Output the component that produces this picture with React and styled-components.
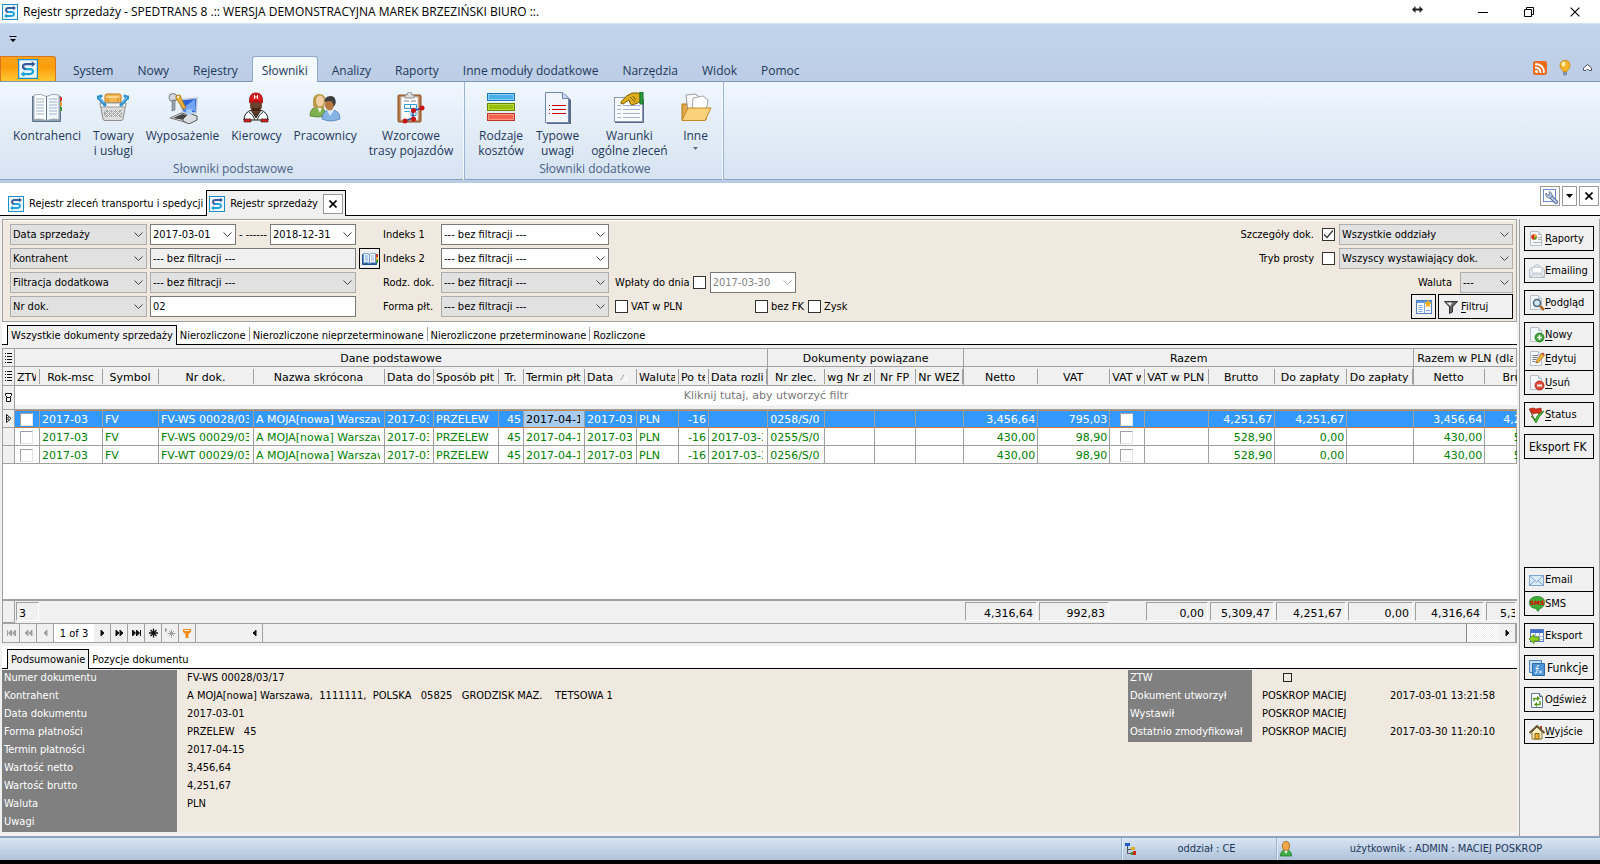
import React from "react";
import styled, { createGlobalStyle, css } from "styled-components";

const GlobalStyle = createGlobalStyle`
  *, *::before, *::after { box-sizing: border-box; }
  body {
    margin: 0;
    background: #f0f0f0;
    color: #000;
    font: 11px/14px "DejaVu Sans Condensed", "DejaVu Sans", sans-serif;
  }
  button, input, select {
    font: inherit;
    color: inherit;
    border-radius: 0;
    margin: 0;
  }
  button { padding: 0; }
  svg { display: block; flex: none; }
  a { color: inherit; text-decoration: none; }
`;

const uiFont = css`
  font-family: "Open Sans", "Noto Sans", sans-serif;
  font-size: 12px;
  line-height: 15px;
`;

/* ---------- icons ---------- */

const Logo = ({ size = 16 }) => (
  <svg width={size} height={size} viewBox="0 0 16 16">
    <rect x=".5" y=".5" width="15" height="15" fill="#eef7fc" stroke="#1b8ecb" />
    <path d="M12 4H6.500Q4 4 4 6t2.500 2" fill="none" stroke="#3b5a9a" strokeWidth="1.800" />
    <path d="M6 8h3.500Q12 8.200 12 10t-2.500 2H4" fill="none" stroke="#1da3d8" strokeWidth="1.800" />
    <path d="M11 1.700 14 4l-3 2.300z" fill="#3b5a9a" />
    <path d="M5 9.700 2 12l3 2.300z" fill="#1da3d8" />
  </svg>
);

const BookIcon = () => (
  <svg width="32" height="32" viewBox="0 0 32 32">
    <path d="M1.500 4.500h28v25h-28z" fill="#8fa3b5" stroke="#5c7288" />
    <path d="M3 3q7-2 12.500 1.500v24Q9 26 3 27.500z" fill="#fff" stroke="#9aa8b5" />
    <path d="M28 3q-7-2-12.500 1.500v24Q22 26 28 27.500z" fill="#f5f8fb" stroke="#9aa8b5" />
    <path d="M5 7h8M5 10h8M5 13h8M5 16h8M5 19h8M5 22h8M18 7h8M18 10h8M18 13h8M18 16h8M18 19h8M18 22h8" stroke="#9db4d0" />
    <path d="M15.500 4.500v24" stroke="#5c7288" />
    <path d="M29 5h2v4h-2z" fill="#d33" />
    <path d="M29 10h2v4h-2z" fill="#e9a020" />
    <path d="M29 15h2v4h-2z" fill="#3a9a3a" />
  </svg>
);

const SmallBookIcon = () => (
  <svg width="16" height="16" viewBox="0 0 16 16">
    <path d="M.5 3.500h14v10H.500z" fill="#2f5f9e" stroke="#24508c" />
    <path d="M1.500 2.500q4-1 6 1v9q-2-1.500-6-.5z" fill="#e6f1fc" stroke="#5f8cc4" strokeWidth=".8" />
    <path d="M13.500 2.500q-4-1-6 1v9q2-1.500 6-.5z" fill="#fff" stroke="#5f8cc4" strokeWidth=".8" />
    <path d="M3 5h3M3 7h3M3 9h3M9 5h3M9 7h3M9 9h3" stroke="#7fa8d8" />
    <path d="M14 3h2v3h-2z" fill="#d33" />
    <path d="M14 6h2v3h-2z" fill="#e9b020" />
    <path d="M14 9h2v3h-2z" fill="#3a9a3a" />
  </svg>
);

const BasketIcon = () => (
  <svg width="32" height="32" viewBox="0 0 32 32">
    <rect x="8" y="2" width="16" height="9" rx="2" fill="#f3b64c" stroke="#c17a1a" />
    <path d="M11 4v6M21 4v6" stroke="#c88a2a" />
    <path d="M9 5h13" stroke="#fbe0a4" strokeWidth="1.500" />
    <path d="M3 11h26l-3 16q-.3 1.500-2 1.500H8q-1.700 0-2-1.500z" fill="#dcdcdc" stroke="#8e8e8e" />
    <path d="M3 11h26l-.5 4h-25z" fill="#f4f4f4" stroke="#9a9a9a" />
    <path d="M7 18h18v7H7z" fill="#aaa" />
    <path d="m7 18 7 7m-3-7 7 7m-3-7 7 7m-3-7 6 6M14 18l-7 7m11-7-7 7m11-7-7 7m10-6-6 6" stroke="#f2f2f2" />
    <path d="m1 5 7 8M31 5l-7 8M1 6l3-2M31 6l-3-2" stroke="#2b8fd0" strokeWidth="3" strokeLinecap="round" />
    <path d="m2 5 5 6M30 5l-5 6" stroke="#90d0f4" />
  </svg>
);

const EquipmentIcon = () => (
  <svg width="32" height="32" viewBox="0 0 32 32">
    <path d="m12 8 18-2-1 15-13-1z" fill="#2a62d8" stroke="#b8c4d6" strokeWidth="1.500" />
    <path d="m16 16 12-9v12l-11-1z" fill="#74a4f4" />
    <path d="m3 26 11-5 14 3-10 6z" fill="#e8e8e8" stroke="#777" />
    <path d="m6 26 9-4 9 2-7 4z" fill="#444" />
    <path d="m16 27 6-6 8 3v4l-8 4-6-3z" fill="#d9dde2" stroke="#555" />
    <path d="m19 18 5-1 2 5-6 1z" fill="#a8d0fa" />
    <circle cx="6" cy="5.500" r="4" fill="#d5dbe0" stroke="#6f7a84" />
    <path d="M5 8v11l3-1V8z" fill="#9aa4ad" stroke="#606a74" strokeWidth=".6" />
    <path d="M9 4q5-3 5 2l5 10-3 1-5-8q-3-1-2-5z" fill="#e8b13c" stroke="#9a6c18" strokeWidth=".8" />
    <circle cx="11" cy="5" r="1" fill="#fff" />
  </svg>
);

const DriverIcon = () => (
  <svg width="32" height="32" viewBox="0 0 32 32">
    <path d="M4 28q0-8 8-10h8q8 2 8 10z" fill="#fafafa" stroke="#1a1a1a" />
    <path d="m11 18 5 8 5-8z" fill="#5b3725" stroke="#1a1a1a" strokeWidth=".8" />
    <path d="M9 20q4 2 6 8M23 20q-4 2-6 8" fill="none" stroke="#333" />
    <path d="M4 27h7v3H4zM21 27h7v3h-7z" fill="#d81f1f" stroke="#1a1a1a" strokeWidth=".6" />
    <ellipse cx="16" cy="14" rx="6" ry="6.500" fill="#6b422c" />
    <path d="M12 15q4 3 8 0l-1 4h-6z" fill="#3d2417" />
    <path d="M9.500 10Q9 1 16 1t6.500 9q-6.500-3-13 0z" fill="#e02020" stroke="#a01010" />
    <path d="M9 10q7-3.500 14 0l-1 1.500q-6-2-12 0z" fill="#b81414" />
    <path d="M14.500 3v4M17.500 3v4M14.500 5h3" stroke="#fff" />
  </svg>
);

const PeopleIcon = () => (
  <svg width="32" height="32" viewBox="0 0 32 32">
    <path d="M1 24q0-9 8-9 8 0 8 9-8 2-16 0z" fill="#7fb04e" stroke="#55802c" strokeWidth=".8" />
    <path d="M8 15h5l-2 6z" fill="#eef5e4" />
    <path d="M4 13Q3 2 10 2q8 0 6 9l-1 5H5z" fill="#b99a4a" />
    <ellipse cx="11" cy="9" rx="4" ry="5.500" fill="#f2cfa5" />
    <path d="M13 27q0-9 9-9t9 9q-9 4-18 0z" fill="#86b4e4" stroke="#4f7fb8" strokeWidth=".8" />
    <path d="m18 18 3 6 4-6z" fill="#dfeaf7" />
    <ellipse cx="20.500" cy="12.500" rx="4.500" ry="6" fill="#b5793f" />
    <path d="M15.500 10q0-6 6-6t5 8l-2 3q0-5-3-6-3 0-6 1z" fill="#3d3d3d" />
  </svg>
);

const RouteIcon = () => (
  <svg width="32" height="32" viewBox="0 0 32 32">
    <rect x="3" y="3" width="23" height="27" rx="1" fill="#b87846" stroke="#8a5028" />
    <rect x="6" y="5" width="17" height="23" fill="#fdfdfd" stroke="#c8c8c8" />
    <path d="M10 3h2q0-3 2.500-3T17 3h2v3h-9z" fill="#dcdcdc" stroke="#909090" />
    <path d="M9 9h5M16 9h5" stroke="#888" />
    <path d="M9.500 12.500h12v4h-12zM15.500 12.500v4M9.500 19.500h5M16 19.500h5v4h-5z" fill="none" stroke="#2d9ae0" />
    <path d="m10 29 8-3v-7l9-3" fill="none" stroke="#2b48a0" strokeWidth="1.500" />
    <g fill="#c81616">
      <circle cx="10" cy="29" r="2.500" />
      <circle cx="18.500" cy="27" r="2.500" />
      <circle cx="18.500" cy="18.500" r="2.500" />
      <circle cx="27" cy="16" r="2.500" />
    </g>
  </svg>
);

const CostsIcon = () => (
  <svg width="32" height="32" viewBox="0 0 32 32">
    <rect x="2.500" y="1.500" width="27" height="7" fill="#4bb0ea" stroke="#1c78b8" />
    <rect x="3.500" y="2.500" width="25" height="5" fill="none" stroke="#8ad0f6" />
    <rect x="2.500" y="11.500" width="27" height="7" fill="#98c00a" stroke="#5f8a00" />
    <rect x="3.500" y="12.500" width="25" height="5" fill="none" stroke="#b8dc40" />
    <rect x="2.500" y="21.500" width="27" height="7" fill="#f8634c" stroke="#c03424" />
    <rect x="3.500" y="22.500" width="25" height="5" fill="none" stroke="#ff9a86" />
  </svg>
);

const NotesIcon = () => (
  <svg width="32" height="32" viewBox="0 0 32 32">
    <path d="M5 2h18l6 6v24H5z" fill="#5a6a80" />
    <path d="M3.500.500h17l6 6v24h-23z" fill="#f2f5fc" stroke="#6d86b8" />
    <path d="M20.500.500v6h6" fill="#cfdaf0" stroke="#6d86b8" />
    <path d="M10 13.500h14M10 17.500h14M10 21.500h14" stroke="#c00" />
    <path d="M7 13.500h1M7 17.500h1M7 21.500h1" stroke="#c00" />
  </svg>
);

const TermsIcon = () => (
  <svg width="32" height="32" viewBox="0 0 32 32">
    <rect x="1.500" y="5.500" width="28" height="24" fill="#f8fafd" stroke="#8a98b4" />
    <path d="M2 30.500h28.500V7" fill="none" stroke="#5c6a86" />
    <path d="M4 13.500h4M4 17.500h4M4 21.500h4M4 25.500h4M10 13.500h17M10 17.500h17M10 21.500h17M10 25.500h17" stroke="#9fb4d8" />
    <path d="M8 10q5-7 11-9h8v9l-5 2q-4 2-5-1l-1-3-6 4q-3 0-2-2z" fill="#dcae1c" stroke="#7c5c08" />
    <path d="m17 5 5 5M20 4l3 4" stroke="#7c5c08" />
    <path d="M27 0h3v12h-3z" fill="#2aa03c" stroke="#147024" />
  </svg>
);

const FolderIcon = () => (
  <svg width="32" height="32" viewBox="0 0 32 32">
    <path d="M2 28V12h6l2 3h16v13z" fill="#e2a84a" stroke="#b07818" />
    <path d="m6 3 9-1 6 4 2 14H8z" fill="#fafafa" stroke="#9a9a9a" />
    <path d="m13 6 10-2 5 4-2 12H12z" fill="#fff" stroke="#a5a5a5" />
    <path d="M8 16h23l-6 12.500H2z" fill="#fbd27c" stroke="#c48a24" />
  </svg>
);

const RssIcon = () => (
  <svg width="14" height="14" viewBox="0 0 14 14">
    <rect width="14" height="14" rx="2" fill="#ee6a1c" />
    <circle cx="3.500" cy="10.500" r="1.500" fill="#fff" />
    <path d="M2 6.500q5.500 0 5.500 5.500M2 3q9 0 9 9" fill="none" stroke="#fff" strokeWidth="1.800" />
  </svg>
);

const BulbIcon = () => (
  <svg width="12" height="16" viewBox="0 0 12 16">
    <path d="M6 .5q5 0 5 5 0 2-1.500 3.500T8 11.500H4Q4 10.500 2.500 9T1 5.500q0-5 5-5z" fill="#f8b428" stroke="#c88410" strokeWidth=".8" />
    <ellipse cx="4.500" cy="4" rx="2" ry="2.500" fill="#fff0b0" />
    <path d="M4 12h4v2.500L7 15.500H5l-1-1z" fill="#8290a8" />
  </svg>
);

const Chevron = ({ color = "#444" }) => (
  <svg width="9" height="6" viewBox="0 0 9 6">
    <path d="m.5.500 4 4 4-4" fill="none" stroke={color} />
  </svg>
);

const WrenchIcon = () => (
  <svg width="16" height="16" viewBox="0 0 16 16">
    <rect x="1.500" y="1.500" width="12" height="12" fill="#fff" stroke="#6d86d0" />
    <path d="m8 8 6 6" stroke="#5c6f96" strokeWidth="4" strokeLinecap="round" />
    <path d="m8 8 6 6" stroke="#b8c8e4" strokeWidth="2" strokeLinecap="round" />
    <path d="M4 5q-1 4 3 5 4 0 3-4L8 3.500 7 4l1 2-2 1.500z" fill="#b8c8e4" stroke="#5c6f96" strokeWidth=".8" />
  </svg>
);

const Page = ({ children }) => (
  <svg width="16" height="16" viewBox="0 0 16 16">
    <path d="M1.500.500h8l3 3v11h-11z" fill="#f4f7fa" stroke="#b4c0cc" />
    <path d="M9.500.500v3h3" fill="#dbe3ec" stroke="#b4c0cc" />
    {children}
  </svg>
);

const ReportIcon = () => (
  <Page>
    <circle cx="5" cy="6" r="2.800" fill="#d83018" />
    <path d="M5 6V3.200A2.800 2.800 0 0 1 7.800 6z" fill="#f0a020" />
    <path d="M5 6h2.800A2.800 2.800 0 0 1 5 8.800z" fill="#58a030" />
    <path d="M9 6.500h3M9 8.500h3M4 11.500h8" stroke="#b0b0b0" />
  </Page>
);
const PreviewIcon = () => (
  <Page>
    <circle cx="8" cy="8" r="3.500" fill="#cfe6f7" stroke="#4a6478" strokeWidth="1.500" />
    <path d="m11 11 4 4" stroke="#b06a28" strokeWidth="2.500" />
  </Page>
);
const NewIcon = () => (
  <Page>
    <circle cx="10.500" cy="10.500" r="4.500" fill="#3da536" stroke="#207a1c" strokeWidth=".8" />
    <path d="M10.500 8v5M8 10.500h5" stroke="#fff" strokeWidth="1.600" />
  </Page>
);
const EditIcon = () => (
  <Page>
    <path d="M3.500 4.500h6M3.500 6.500h5M3.500 8.500h4M3.500 10.500h3" stroke="#777" />
    <path d="m7 12 1-3 5-7 2.500 2-5.500 7z" fill="#f0b838" stroke="#a06820" strokeWidth=".8" />
    <path d="m12.500 3 2 1.500 1-1.500L14 1.500z" fill="#d84838" />
  </Page>
);
const DeleteIcon = () => (
  <Page>
    <circle cx="10.500" cy="10.500" r="4.500" fill="#e04838" stroke="#a82418" strokeWidth=".8" />
    <path d="M8 10.500h5" stroke="#fff" strokeWidth="2" />
  </Page>
);
const RefreshIcon = () => (
  <svg width="16" height="16" viewBox="0 0 16 16">
    <path d="M2.500 1.500h8l3 3v11h-11z" fill="#fff" stroke="#5c7896" />
    <path d="M10.500 1.500v3h3" fill="#b8cce0" stroke="#5c7896" />
    <path d="M5 9V6.500h4M11 9v3.500H7" fill="none" stroke="#4f9a1a" strokeWidth="1.500" />
    <path d="m8 4 3 2.500L8 9zM8 10l-3 2.500L8 15z" fill="#4f9a1a" />
  </svg>
);
const OpenMailIcon = () => (
  <svg width="16" height="16" viewBox="0 0 16 16">
    <path d="M.5 6.500 8 1.500l7.500 5v8H.500z" fill="#e4e9ee" stroke="#b4bec8" />
    <path d="M3 4.500h10V9l-5 3-5-3z" fill="#fff" stroke="#c4ccd4" />
    <path d="m1 14 5-4h4l5 4" fill="none" stroke="#b4bec8" />
  </svg>
);
const MailIcon = () => (
  <svg width="16" height="16" viewBox="0 0 16 16">
    <rect x=".5" y="3.500" width="14" height="10" fill="#dcebfa" stroke="#7fa4d4" />
    <path d="m1 4 6.500 6L14 4M1 13l5-4.500M14 13 9 8.500" fill="none" stroke="#7fa4d4" />
  </svg>
);
const StatusIcon = () => (
  <svg width="16" height="16" viewBox="0 0 16 16">
    <path d="m0 2 4-1 3 1 5-1 1 6-6-1-3 1z" fill="#d8301c" stroke="#901808" strokeWidth=".6" />
    <path d="m1 3 5 11" stroke="#803020" />
    <path d="M2 9q3 1 4 4Q9 6 15 4 10 9 7 16 5 12 2 9z" fill="#4cb83c" stroke="#1f7c18" strokeWidth=".8" />
  </svg>
);
const SmsIcon = () => (
  <svg width="16" height="16" viewBox="0 0 16 16">
    <path d="M8 .5q7.500 0 7.500 6 0 4.500-4.500 6l-2 3-2-3Q.5 12 .5 6.500T8 .500z" fill="#3fae38" stroke="#237a20" strokeWidth=".8" />
    <text x="8" y="9" textAnchor="middle" fontSize="6" fontWeight="bold" fontFamily="DejaVu Sans" fill="#e00000">SMS</text>
  </svg>
);
const ExportIcon = () => (
  <svg width="16" height="16" viewBox="0 0 16 16">
    <rect x="1.500" y="1.500" width="13" height="12" fill="#fff" stroke="#5b80c0" />
    <path d="M2 2h12v3H2z" fill="#3e6fd0" />
    <path d="M2 8.500h12M2 11.500h12M6.500 5v8M10.500 5v8" stroke="#9fb8dc" />
    <path d="M0 11 5 6.500V9h5v4H5v2.500z" fill="#8ed020" stroke="#4c8010" strokeWidth=".8" />
  </svg>
);
const FunctionIcon = () => (
  <svg width="16" height="16" viewBox="0 0 16 16">
    <path d="M.5.500h12v12H.500z" fill="#c2dcf4" stroke="#4d84bc" />
    <path d="M3.500 3.500h12v12h-12z" fill="#4d94d8" stroke="#2c6cac" />
    <path d="M10 5.500q-2-.5-2 2v4q0 2-2 1.500M6.500 8.500H10M10 10.500l3 3m0-3-3 3" fill="none" stroke="#fff" />
  </svg>
);
const HouseIcon = () => (
  <svg width="16" height="16" viewBox="0 0 16 16">
    <path d="M11 2h2v4h-2z" fill="#b84020" />
    <path d="M3 8v7h10V8L8 3z" fill="#f8edc4" stroke="#8a7030" />
    <path d="m.5 9 7.500-7 7.500 7" fill="none" stroke="#6a5838" strokeWidth="2" />
    <path d="M6 9.500h4V15H6z" fill="#f0b030" stroke="#8a6010" />
  </svg>
);
const FunnelIcon = () => (
  <svg width="16" height="16" viewBox="0 0 16 16">
    <path d="M1.500 2.500h13l-5 5.500v5l-3 1.500V8z" fill="#666" stroke="#333" />
    <path d="M3.500 3.500H9L7.500 7z" fill="#eee" />
  </svg>
);
const LayoutIcon = () => (
  <svg width="16" height="16" viewBox="0 0 16 16">
    <rect x=".5" y="1.500" width="15" height="13" fill="#fff" stroke="#4b7fc0" />
    <path d="M1 2h14v2H1z" fill="#5a9be0" />
    <path d="M8.500 4v10M2.500 6.500h4M2.500 8.500h4M2.500 10.500h4M2.500 12.500h4M10 11.500h4" stroke="#7fa8d8" />
    <path d="m12 .5 1.200 2.800 2.800.2-2.200 2 .8 3L12 7 9.400 8.500l.8-3L8 3.500l2.800-.2z" fill="#fbb01c" />
  </svg>
);
const TreeIcon = () => (
  <svg width="12" height="12" viewBox="0 0 12 12">
    <path d="M2.500 3v7.500H7M2.500 6.500H7" fill="none" stroke="#555" />
    <path d="M0 0h5v3H0z" fill="#1d5cc0" />
    <path d="M6 4h4v3H6z" fill="#d8b020" />
    <path d="M6 9h3v3H6z" fill="#3a9a30" />
    <path d="M8 8h3v4H8z" fill="#d02818" />
  </svg>
);
const UserIcon = () => (
  <svg width="12" height="16" viewBox="0 0 12 16">
    <path d="M.5 15q0-6 5.500-6t5.500 6z" fill="#3fae48" stroke="#1f7c28" strokeWidth=".8" />
    <path d="m4 9 2 4 2-4z" fill="#fff" />
    <ellipse cx="6" cy="5" rx="3.500" ry="4.500" fill="#f0a848" stroke="#a06010" strokeWidth=".8" />
  </svg>
);

/* ---------- title bar and ribbon ---------- */

const Window = styled.div`
  min-height: 100vh;
  display: flex;
  flex-direction: column;
`;

const TitleBar = styled.header`
  ${uiFont}
  height: 23px;
  flex: none;
  display: flex;
  align-items: center;
  background: #fff;
  padding: 0 2px;
`;

const WindowTitle = styled.h1`
  font: inherit;
  margin: 0 auto 0 5px;
  white-space: nowrap;
`;

const WindowButton = styled.button`
  width: 46px;
  height: 22px;
  border: 0;
  background: none;
  display: flex;
  align-items: center;
  justify-content: center;
`;

const MoveHint = styled.span`
  margin: 0 37px 4px 0;
`;

const RibbonTop = styled.div`
  ${uiFont}
  flex: none;
  color: #1e395b;
  background: linear-gradient(#d6e4f4 0, #c2d4eb 2px, #bccde5);
  border-bottom: 1px solid #7d97b4;
`;

const QuickAccess = styled.div`
  height: 33px;
  padding: 13px 0 0 9px;
`;

const QuickButton = styled.button`
  display: block;
  border: 0;
  background: none;
`;

const RibbonTabs = styled.nav`
  display: flex;
  height: 25px;
  gap: 4px;
`;

const AppButton = styled.button`
  width: 56px;
  height: 25px;
  margin-right: 3px;
  display: flex;
  align-items: center;
  justify-content: center;
  border: 1px solid #d9761a;
  border-bottom: 0;
  border-radius: 0 3px 0 0;
  background: linear-gradient(#f8a21c, #fb9d0a 40%, #ffc630);
`;

const RibbonTab = styled.a`
  height: 26px;
  padding: 6px 9px 0;
  border: 1px solid transparent;
  border-bottom: 0;
  border-radius: 3px 3px 0 0;
  ${(p) =>
    p.$active &&
    css`
      background: #f4f9fe;
      border-color: #8fa9c8;
    `}
`;

const RibbonTools = styled.div`
  display: flex;
  align-items: center;
  gap: 12px;
  margin-left: auto;
  padding: 0 8px 2px 0;
`;

const RibbonBody = styled.div`
  ${uiFont}
  flex: none;
  height: 101px;
  display: flex;
  color: #1e395b;
  background: linear-gradient(#eff6fe, #d6e3f1 97px);
  border-bottom: 3px solid #b8cce4;
  box-shadow: inset 0 -1px #8aa0bc;
`;

const RibbonGroup = styled.section`
  display: flex;
  flex-direction: column;
  border-right: 1px solid #9db4cf;
  padding: 8px 5px 0 7px;
  box-shadow: inset -1px 0 #f4f9ff;
`;

const RibbonItems = styled.div`
  display: flex;
  height: 71px;
`;

const GroupLabel = styled.h2`
  font: inherit;
  margin: 0;
  text-align: center;
  color: #4a6386;
`;

const RibbonButton = styled.button`
  display: flex;
  flex-direction: column;
  align-items: center;
  border: 0;
  background: none;
  padding: 2px 6px 0;
  gap: 4px;
  line-height: 15px;
  white-space: pre-line;
`;

/* ---------- document tabs ---------- */

const DocTabs = styled.nav`
  height: 33px;
  flex: none;
  display: flex;
  align-items: flex-end;
  background: #fff;
  border-bottom: 1px solid #000;
  padding-left: 3px;
`;

const DocTab = styled.div`
  height: 26px;
  margin-bottom: -1px;
  display: flex;
  align-items: center;
  gap: 5px;
  padding: 1px 2px 0 4px;
  border: 1px solid transparent;
  border-bottom: 0;
  white-space: nowrap;
  ${(p) =>
    p.$active &&
    css`
      background: #f0f0f0;
      border-color: #000;
      padding-left: 2px;
    `}
`;

const SquareButton = styled.button`
  width: ${(p) => p.$w || 20}px;
  height: 20px;
  border: 1px solid #999;
  background: #fff;
  display: flex;
  align-items: center;
  justify-content: center;
`;

const DocTools = styled.div`
  display: flex;
  align-self: flex-start;
  gap: 2px;
  margin-left: auto;
  padding: 3px 1px 0 0;
`;

/* ---------- workspace ---------- */

const Workspace = styled.div`
  flex: 1;
  display: flex;
  padding-top: 3px;
  background: #f0f0f0;
`;

const Main = styled.main`
  flex: 1;
  min-width: 0;
  margin: 0 2px;
  display: flex;
  flex-direction: column;
`;

const Filters = styled.form`
  display: flex;
  justify-content: space-between;
  background: #f0e9df;
  border: 1px solid #a0a0a0;
  padding: 4px 3px 4px 7px;
  box-shadow: inset 0 1px #fff;
`;

const FilterBlock = styled.div`
  display: grid;
  grid-auto-rows: 21px;
  grid-template-columns: ${(p) => p.$cols};
  gap: 3px;
  align-items: center;
`;

const FilterLine = styled.div`
  height: 21px;
  display: flex;
  align-items: center;
  gap: ${(p) => p.$gap || 4}px;
  justify-content: ${(p) => p.$justify || "flex-start"};
  padding-left: ${(p) => p.$indent || 0}px;
`;

const DateRange = styled.div`
  display: flex;
  align-items: center;
  justify-content: space-between;
  white-space: nowrap;
`;

const FieldBox = styled.span`
  position: relative;
  display: block;
  flex: none;
  width: ${(p) => (p.$w ? p.$w + "px" : "100%")};
`;

const fieldLook = css`
  appearance: none;
  display: block;
  width: 100%;
  height: 21px;
  padding: 1px 18px 0 2px;
  outline: 0;
  background: ${(p) => (p.$grey ? "#e1e1e1" : "#fff")};
  border: 1px solid ${(p) => (p.$grey ? "#adadad" : "#7a7a7a")};
`;

const SelectInput = styled.select`
  ${fieldLook}
`;

const TextInput = styled.input`
  ${fieldLook}
  padding-top: 0;
  background: ${(p) => (p.readOnly ? "#f0f0f0" : "#fff")};
  &:disabled {
    color: #838383;
  }
`;

const Arrow = styled.span`
  position: absolute;
  right: 4px;
  top: 8px;
  pointer-events: none;
`;

const Select = ({ label, value, grey, w, id }) => (
  <FieldBox $w={w}>
    <SelectInput id={id} aria-label={id ? undefined : label} $grey={grey}>
      <option>{value}</option>
    </SelectInput>
    <Arrow>
      <Chevron />
    </Arrow>
  </FieldBox>
);

const DateBox = ({ label, value, disabled }) => (
  <FieldBox $w={86}>
    <TextInput aria-label={label} defaultValue={value} disabled={disabled} />
    <Arrow>
      <Chevron color={disabled ? "#aaa" : "#444"} />
    </Arrow>
  </FieldBox>
);

const CheckLabel = styled.label`
  display: flex;
  align-items: center;
  gap: ${(p) => p.$gap || 3}px;
  min-width: ${(p) => p.$w || 0}px;
  white-space: nowrap;
`;

const Tick = styled.input`
  appearance: none;
  flex: none;
  width: 13px;
  height: 13px;
  border: 1px solid #333;
  background: #fff;
  &:checked {
    background: #fff
      url("data:image/svg+xml,%3Csvg xmlns='http://www.w3.org/2000/svg' viewBox='0 0 11 11'%3E%3Cpath d='m1 5.500 3 3 6-7' fill='none' stroke='%23333' stroke-width='1.200'/%3E%3C/svg%3E");
  }
`;

const FieldLabel = styled.label`
  white-space: nowrap;
  padding-top: 1px;
  padding-right: ${(p) => p.$pad || 0}px;
`;

const SolidButton = styled.button`
  width: ${(p) => p.$w}px;
  height: ${(p) => p.$h || 25}px;
  display: flex;
  align-items: center;
  justify-content: ${(p) => (p.$center ? "center" : "flex-start")};
  gap: ${(p) => p.$gap || 0}px;
  padding-left: ${(p) => (p.$center ? 0 : 4)}px;
  border: 1px solid #000;
  background: #f0f0f0;
  font-size: ${(p) => (p.$big ? 12 : 11)}px;
  u {
    text-underline-offset: 2px;
  }
`;

const PageTabs = styled.nav`
  display: flex;
  align-items: flex-end;
  height: 23px;
  background: #fff;
  border-bottom: 1px solid #000;
  padding-left: 5px;
`;

const PageTab = styled.a`
  height: 20px;
  margin-bottom: -1px;
  padding: 3px 2px 0;
  border: 1px solid transparent;
  border-bottom: 0;
  white-space: nowrap;
  ${(p) =>
    p.$active &&
    css`
      background: #f0f0f0;
      border-color: #000;
      padding: 3px 3px 0;
    `}
`;

const TabSplit = styled.i`
  width: 1px;
  height: 14px;
  margin-bottom: 3px;
  background: #a0a0a0;
`;

/* ---------- grid ---------- */

const GridBox = styled.div`
  flex: 1;
  min-height: 0;
  display: flex;
  flex-direction: column;
  margin: 3px 0;
  background: #fff;
  border: solid #a0a0a0;
  border-width: 1px 0 0 1px;
  overflow: hidden;
  font-family: "DejaVu Sans", sans-serif;
`;

const GridTable = styled.table`
  width: 100%;
  table-layout: fixed;
  border-collapse: separate;
  border-spacing: 0;
  line-height: 14px;
`;

const Band = styled.th`
  height: 18px;
  padding: 2px 3px 0;
  font-weight: normal;
  background: #f0f0f0;
  border: solid #a0a0a0;
  border-width: 0 1px 1px 0;
  white-space: nowrap;
  overflow: hidden;
`;

const ColHead = styled.th`
  height: 19px;
  padding: 3px 4px 0 2px;
  font-weight: normal;
  background: linear-gradient(#a0a0a0, #a0a0a0) right center / 1px 15px no-repeat #f0f0f0;
  border-bottom: 1px solid #a0a0a0;
  ${(p) => p.$bandEnd && "border-right: 1px solid #a0a0a0;"}
`;

const Clip = styled.div`
  overflow: hidden;
  white-space: nowrap;
  min-width: ${(p) => p.$min || 0}px;
  text-align: ${(p) => p.$align || "left"};
`;

const Marker = styled.td`
  height: ${(p) => p.$h || 18}px;
  padding: 0;
  background: #f0f0f0;
  border: solid #a0a0a0;
  border-width: 0 1px 1px 0;
  svg {
    margin: auto;
  }
`;

const Hint = styled.td`
  height: 24px;
  padding: 0 0 4px;
  text-align: center;
  color: #777;
  background: linear-gradient(#fff 19px, #f0f0f0 19px);
  border-bottom: 1px solid #a0a0a0;
`;

const Cell = styled.td`
  height: 18px;
  padding: 2px ${(p) => (p.$numeric ? 2 : 4)}px 0 2px;
  color: #008000;
  border: solid #a0a0a0;
  border-width: 0 1px 1px 0;
  ${(p) =>
    p.$selected &&
    css`
      color: #fff;
      background: ${p.$focused ? "#a8ccf0" : "#3399ff"};
      border-bottom-color: #c87838;
      box-shadow: inset 0 1px #c08850;
    `}
  ${(p) => p.$focused && "color: #000;"}
`;

const CellTick = styled.input`
  appearance: none;
  display: block;
  width: 13px;
  height: 13px;
  margin: 0 auto 1px;
  background: #fff;
  border: 1px solid #a0a0a0;
  border-right-color: #e3e3e3;
  border-bottom-color: #e3e3e3;
`;

const FooterRow = styled.div`
  margin-top: auto;
  background: #f0f0f0;
  border-top: 2px solid #a0a0a0;
`;

const SumCell = styled.td`
  height: 21px;
  padding: 1px 1px 2px;
`;

const SumBox = styled.div`
  height: 19px;
  padding: 4px 3px 0 2px;
  overflow: hidden;
  text-align: right;
  line-height: 13px;
  border: 1px solid #a0a0a0;
  border-right-color: #fff;
  border-bottom-color: #fff;
  ${(p) => p.$left && "text-align: left;"}
`;

const Navigator = styled.div`
  display: flex;
  height: 20px;
  background: #f0f0f0;
  border: solid #a0a0a0;
  border-width: 1px 1px 1px 0;
  font-family: "DejaVu Sans Condensed", "DejaVu Sans", sans-serif;
`;

const NavButton = styled.button`
  flex: none;
  width: 17px;
  height: 18px;
  border: 0;
  border-right: 1px solid #a0a0a0;
  background: #f0f0f0;
  display: flex;
  align-items: center;
  justify-content: center;
`;

const Position = styled.span`
  width: 40px;
  flex: none;
  background: #fff;
  text-align: center;
  line-height: 19px;
`;

const ScrollGap = styled.span`
  width: 50px;
  flex: none;
`;

const ScrollThumb = styled.span`
  flex: 1;
  border-right: 1px solid #888;
`;

const ScrollTrack = styled.span`
  width: 32px;
  background: repeating-conic-gradient(#fff 0 25%, #f0f0f0 0 50%) 0 0 / 2px 2px;
`;

/* ---------- details ---------- */

const Details = styled.div`
  display: flex;
  justify-content: space-between;
  align-items: flex-start;
  min-height: 162px;
  margin: 1px 0 4px;
  background: #f0e9df;
`;

const DetailTable = styled.table`
  border-collapse: collapse;
  line-height: 14px;
`;

const DetailHead = styled.th`
  width: ${(p) => p.$w}px;
  height: 18px;
  padding: 0 2px 3px;
  background: #808080;
  color: #fff;
  font-weight: normal;
  text-align: left;
`;

const DetailValue = styled.td`
  height: 18px;
  padding: 0 0 3px 10px;
  min-width: ${(p) => p.$w || 0}px;
  white-space: pre;
`;

const ZtwMark = styled.input`
  appearance: none;
  display: block;
  width: 9px;
  height: 9px;
  margin: 0 0 0 21px;
  border: 1px solid #222;
`;

/* ---------- side bar, status bar ---------- */

const SideBar = styled.aside`
  flex: none;
  width: 81px;
  display: flex;
  flex-direction: column;
  gap: 7px;
  padding: 7px 0 92px 4px;
  border: solid #a0a0a0;
  border-width: 0 1px;
`;

const ButtonStack = styled.div`
  display: flex;
  flex-direction: column;
  > * + * {
    margin-top: -1px;
  }
`;

const LowerButtons = styled.div`
  margin-top: auto;
  display: flex;
  flex-direction: column;
  gap: 7px;
`;

const StatusBar = styled.footer`
  flex: none;
  display: flex;
  justify-content: flex-end;
  height: 28px;
  color: #1e395b;
  background: linear-gradient(#d8e4f3, #b0c3da);
  border-top: 2px solid #8ea4bd;
  border-bottom: 4px solid #000;
`;

const StatusPart = styled.div`
  width: ${(p) => p.$w}px;
  display: flex;
  align-items: center;
  padding-left: 3px;
  border-left: 1px solid #9db2cc;
  box-shadow: inset 1px 0 #e4eefa;
`;

const StatusText = styled.span`
  flex: 1;
  text-align: center;
`;

const ribbonTabs = [
  "System", "Nowy", "Rejestry", "Słowniki", "Analizy", "Raporty",
  "Inne moduły dodatkowe", "Narzędzia", "Widok", "Pomoc",
];

const basicItems = [
  ["Kontrahenci", BookIcon],
  ["Towary\ni usługi", BasketIcon],
  ["Wyposażenie", EquipmentIcon],
  ["Kierowcy", DriverIcon],
  ["Pracownicy", PeopleIcon],
  ["Wzorcowe\ntrasy pojazdów", RouteIcon],
];

const extraItems = [
  ["Rodzaje\nkosztów", CostsIcon],
  ["Typowe\nuwagi", NotesIcon],
  ["Warunki\nogólne zleceń", TermsIcon],
  ["Inne", FolderIcon, true],
];

const columns = [
  ["ZTW", 25, "left"],
  ["Rok-msc", 63],
  ["Symbol", 56],
  ["Nr dok.", 95],
  ["Nazwa skrócona", 131],
  ["Data dok.", 49, "left"],
  ["Sposób płt.", 65, "left"],
  ["Tr.", 25],
  ["Termin płt.", 61, "left"],
  ["Data", 52, "left"],
  ["Waluta", 42, "left"],
  ["Po term.", 30, "left"],
  ["Data rozlicz.", 59, "left"],
  ["Nr zlec.", 57],
  ["wg Nr zlec.", 50, "left"],
  ["Nr FP", 41],
  ["Nr WEZ", 48],
  ["Netto", 74],
  ["VAT", 72],
  ["VAT w PLN", 35, "left"],
  ["VAT w PLN", 64, "left"],
  ["Brutto", 66],
  ["Do zapłaty", 72],
  ["Do zapłaty", 67],
  ["Netto", 71],
  ["Brutto", null],
];

const bandEnds = [12, 16, 23];
const numeric = [7, 11, 17, 18, 20, 21, 22, 23, 24, 25];

const rows = [
  [false, "2017-03", "FV", "FV-WS 00028/03/17", "A MOJA[nowa] Warszawa", "2017-03-01", "PRZELEW", "45", "2017-04-15", "2017-03-01", "PLN", "-16", "", "0258/S/03/17", "", "", "", "3,456,64", "795,03", false, "", "4,251,67", "4,251,67", "", "3,456,64", "4,251,67"],
  [false, "2017-03", "FV", "FV-WS 00029/03/17", "A MOJA[nowa] Warszawa", "2017-03-01", "PRZELEW", "45", "2017-04-15", "2017-03-01", "PLN", "-16", "2017-03-30", "0255/S/03/17", "", "", "", "430,00", "98,90", false, "", "528,90", "0,00", "", "430,00", "528,90"],
  [false, "2017-03", "FV", "FV-WT 00029/03/17", "A MOJA[nowa] Warszawa", "2017-03-01", "PRZELEW", "45", "2017-04-15", "2017-03-01", "PLN", "-16", "2017-03-30", "0256/S/03/17", "", "", "", "430,00", "98,90", false, "", "528,90", "0,00", "", "430,00", "528,90"],
];

const sums = { 0: "3", 17: "4,316,64", 18: "992,83", 20: "0,00", 21: "5,309,47", 22: "4,251,67", 23: "0,00", 24: "4,316,64", 25: "5,309,47" };

const summary = [
  ["Numer dokumentu", "FV-WS 00028/03/17"],
  ["Kontrahent", "A MOJA[nowa] Warszawa,  1111111,  POLSKA   05825   GRODZISK MAZ.    TETSOWA 1"],
  ["Data dokumentu", "2017-03-01"],
  ["Forma płatności", "PRZELEW   45"],
  ["Termin płatności", "2017-04-15"],
  ["Wartość netto", "3,456,64"],
  ["Wartość brutto", "4,251,67"],
  ["Waluta", "PLN"],
  ["Uwagi", ""],
];

const audit = [
  ["Dokument utworzył", "POSKROP MACIEJ", "2017-03-01 13:21:58"],
  ["Wystawił", "POSKROP MACIEJ", ""],
  ["Ostatnio zmodyfikował", "POSKROP MACIEJ", "2017-03-30 11:20:10"],
];

const navGlyphs = {
  first: <path d="M1.500 2v6M5.500 2v6l-3-3zM9.500 2v6l-3-3z" />,
  prevPage: <path d="M5 2v6L2 5zM9 2v6L6 5z" />,
  prev: <path d="M7 2v6L4 5z" />,
  next: <path d="M4 2v6l3-3z" />,
  nextPage: <path d="M2 2v6l3-3zM6 2v6l3-3z" />,
  last: <path d="M1.500 2v6l3-3zM5.500 2v6l3-3zM9.500 2v6" />,
  add: <path d="M5.500.500v9M1 5h9M2.500 2l6 6M8.500 2l-6 6" strokeWidth="1.300" />,
  clone: <path d="M6.500 1.500v8M2.500 5.500h8M4 3l5 5M9 3 4 8M0 0v4l2-2z" />,
};

const NavIcon = ({ name, faded }) => (
  <svg width="11" height="10" viewBox="0 0 11 10" fill={faded ? "#a0a0a0" : "#111"} stroke={faded ? "#a0a0a0" : "#111"}>
    {navGlyphs[name]}
  </svg>
);

const MenuIcon = () => (
  <svg width="7" height="10" viewBox="0 0 7 10">
    <path d="M0 .5h1M2 .5h5M0 3.500h1M2 3.500h5M0 6.500h1M2 6.500h5M0 9.500h1M2 9.500h5" stroke="#111" />
  </svg>
);

const Cross = ({ size = 8, width = 1.6 }) => (
  <svg width={size} height={size} viewBox="0 0 8 8">
    <path d="m.5.500 7 7m0-7-7 7" stroke="#000" strokeWidth={width} />
  </svg>
);

const Caret = () => (
  <svg width="7" height="4" viewBox="0 0 7 4">
    <path d="M0 0h7L3.500 4z" />
  </svg>
);

const Columns = () => (
  <colgroup>
    <col style={{ width: 12 }} />
    {columns.map(([name, width], i) => (
      <col key={name + i} style={width ? { width } : undefined} />
    ))}
  </colgroup>
);

const RibbonItem = ({ item: [name, Icon, menu] }) => (
  <RibbonButton type="button">
    <Icon />
    <span>{name}</span>
    {menu && (
      <svg width="5" height="3" viewBox="0 0 5 3">
        <path d="M0 0h5L2.500 3z" fill="#5a6a80" />
      </svg>
    )}
  </RibbonButton>
);

const SideButton = ({ icon: Icon, big, children }) => (
  <SolidButton type="button" $w={70} $big={big} $gap={big ? 2 : 0}>
    {Icon && <Icon />}
    <span>{children}</span>
  </SolidButton>
);

const Ribbon = () => (
  <>
    <RibbonTop>
      <QuickAccess>
        <QuickButton type="button" aria-label="Pasek szybkiego dostępu">
          <svg width="8" height="7" viewBox="0 0 8 7">
            <path d="M.5 0h7v1h-7zM1 3h6L4 6z" />
          </svg>
        </QuickButton>
      </QuickAccess>
      <RibbonTabs>
        <AppButton type="button" aria-label="SPEDTRANS">
          <Logo size={20} />
        </AppButton>
        {ribbonTabs.map((name) => (
          <RibbonTab key={name} href="#" $active={name === "Słowniki"}>
            {name}
          </RibbonTab>
        ))}
        <RibbonTools>
          <RssIcon />
          <BulbIcon />
          <svg width="9" height="8" viewBox="0 0 9 8">
            <path d="m.5 4 4-3.500 4 3.500v2.500H6L4.500 5 3 6.500H.500z" fill="#fff" stroke="#445" strokeWidth=".9" />
          </svg>
        </RibbonTools>
      </RibbonTabs>
    </RibbonTop>
    <RibbonBody>
      <RibbonGroup>
        <RibbonItems>
          {basicItems.map((item) => (
            <RibbonItem key={item[0]} item={item} />
          ))}
        </RibbonItems>
        <GroupLabel>Słowniki podstawowe</GroupLabel>
      </RibbonGroup>
      <RibbonGroup>
        <RibbonItems>
          {extraItems.map((item) => (
            <RibbonItem key={item[0]} item={item} />
          ))}
        </RibbonItems>
        <GroupLabel>Słowniki dodatkowe</GroupLabel>
      </RibbonGroup>
    </RibbonBody>
  </>
);

const FilterPanel = () => (
  <Filters>
    <FilterBlock $cols="137px 206px 21px 55px 168px auto">
      <Select label="Rodzaj daty" value="Data sprzedaży" grey />
      <DateRange>
        <DateBox label="Data od" value="2017-03-01" />
        <span>- ------</span>
        <DateBox label="Data do" value="2018-12-31" />
      </DateRange>
      <span />
      <FieldLabel htmlFor="index1">Indeks 1</FieldLabel>
      <Select id="index1" value="--- bez filtracji ---" />
      <span />

      <Select label="Pole kontrahenta" value="Kontrahent" grey />
      <FieldBox>
        <TextInput aria-label="Kontrahent" readOnly value="--- bez filtracji ---" />
      </FieldBox>
      <SolidButton type="button" $w={21} $h={21} $center aria-label="Wybierz kontrahenta">
        <SmallBookIcon />
      </SolidButton>
      <FieldLabel htmlFor="index2">Indeks 2</FieldLabel>
      <Select id="index2" value="--- bez filtracji ---" />
      <span />

      <Select label="Rodzaj filtracji" value="Filtracja dodatkowa" grey />
      <Select label="Filtracja dodatkowa" value="--- bez filtracji ---" grey />
      <span />
      <FieldLabel htmlFor="kind">Rodz. dok.</FieldLabel>
      <Select id="kind" value="--- bez filtracji ---" grey />
      <FilterLine $indent={3}>
        <CheckLabel>
          Wpłaty do dnia
          <Tick type="checkbox" />
        </CheckLabel>
        <DateBox label="Wpłaty do dnia" value="2017-03-30" disabled />
      </FilterLine>

      <Select label="Rodzaj numeru" value="Nr dok." grey />
      <FieldBox>
        <TextInput aria-label="Nr dok." defaultValue="02" />
      </FieldBox>
      <span />
      <FieldLabel htmlFor="payment">Forma płt.</FieldLabel>
      <Select id="payment" value="--- bez filtracji ---" grey />
      <FilterLine $indent={3}>
        <CheckLabel $w={136}>
          <Tick type="checkbox" />
          VAT w PLN
        </CheckLabel>
        <CheckLabel>
          <Tick type="checkbox" />
          bez FK
        </CheckLabel>
        <CheckLabel>
          <Tick type="checkbox" />
          Zysk
        </CheckLabel>
      </FilterLine>
    </FilterBlock>
    <FilterBlock $cols="auto">
      <FilterLine $justify="flex-end">
        <CheckLabel $gap={8}>
          Szczegóły dok.
          <Tick type="checkbox" defaultChecked />
        </CheckLabel>
        <Select label="Oddział" value="Wszystkie oddziały" grey w={174} />
      </FilterLine>
      <FilterLine $justify="flex-end">
        <CheckLabel $gap={8}>
          Tryb prosty
          <Tick type="checkbox" />
        </CheckLabel>
        <Select label="Wystawiający" value="Wszyscy wystawiający dok." grey w={174} />
      </FilterLine>
      <FilterLine $justify="flex-end">
        <FieldLabel htmlFor="currency" $pad={4}>Waluta</FieldLabel>
        <Select id="currency" value="---" grey w={53} />
      </FilterLine>
      <FilterLine $justify="flex-end" $gap={2}>
        <SolidButton type="button" $w={25} $center aria-label="Układ filtrów">
          <LayoutIcon />
        </SolidButton>
        <SolidButton type="button" $w={75} $gap={2}>
          <FunnelIcon />
          <span><u>F</u>iltruj</span>
        </SolidButton>
      </FilterLine>
    </FilterBlock>
  </Filters>
);

const cellContent = (value, label) =>
  value === false ? <CellTick type="checkbox" aria-label={label} /> : value;

const SortMark = styled.svg`
  display: inline-block;
  margin-left: 7px;
`;

const Grid = () => (
  <GridBox>
    <GridTable>
      <Columns />
      <thead>
        <tr>
          <Marker><MenuIcon /></Marker>
          <Band colSpan={13}>Dane podstawowe</Band>
          <Band colSpan={4}>Dokumenty powiązane</Band>
          <Band colSpan={7}>Razem</Band>
          <Band colSpan={2}><Clip>Razem w PLN (dla</Clip></Band>
        </tr>
        <tr>
          <Marker><MenuIcon /></Marker>
          {columns.map(([name, width, align], i) => (
            <ColHead key={i} $bandEnd={bandEnds.includes(i)}>
              <Clip $align={align || "center"} $min={width ? 0 : 65}>
                {name}
                {i === 9 && (
                  <SortMark width="8" height="7" viewBox="0 0 8 7">
                    <path d="M.5 6.500 4 .5" stroke="#a0a0a0" />
                    <path d="m4 .5 3.500 6h-7" fill="none" stroke="#fff" />
                  </SortMark>
                )}
              </Clip>
            </ColHead>
          ))}
        </tr>
      </thead>
      <tbody>
        <tr>
          <Marker $h={24}>
            <svg width="7" height="9" viewBox="0 0 7 9">
              <path d="M.5.500h6v2l-2 2h-2l-2-2zM1.500 4.500h4v4h-4z" fill="#fff" stroke="#111" />
            </svg>
          </Marker>
          <Hint colSpan={26}>Kliknij tutaj, aby utworzyć filtr</Hint>
        </tr>
        {rows.map((row, r) => (
          <tr key={r}>
            <Marker>
              {r === 0 && (
                <svg width="6" height="9" viewBox="0 0 6 9">
                  <path d="m.5.500 4.500 4-4.500 4zM2 3v3" fill="#fff" stroke="#111" />
                </svg>
              )}
            </Marker>
            {row.map((value, i) => (
              <Cell key={i} $selected={r === 0} $focused={r === 0 && i === 8} $numeric={numeric.includes(i)}>
                <Clip $align={numeric.includes(i) ? "right" : "left"} $min={i === 25 ? 65 : 0}>
                  {cellContent(value, columns[i][0])}
                </Clip>
              </Cell>
            ))}
          </tr>
        ))}
      </tbody>
    </GridTable>
    <FooterRow>
      <GridTable>
        <Columns />
        <tbody>
          <tr>
            <Marker />
            {columns.map((column, i) => (
              <SumCell key={i}>
                {sums[i] && (
                  <SumBox $left={i === 0}>
                    <Clip $align={i ? "right" : "left"} $min={i === 25 ? 60 : 0}>{sums[i]}</Clip>
                  </SumBox>
                )}
              </SumCell>
            ))}
          </tr>
        </tbody>
      </GridTable>
    </FooterRow>
    <Navigator>
      <NavButton type="button" aria-label="Pierwszy"><NavIcon name="first" faded /></NavButton>
      <NavButton type="button" aria-label="Poprzednia strona"><NavIcon name="prevPage" faded /></NavButton>
      <NavButton type="button" aria-label="Poprzedni"><NavIcon name="prev" faded /></NavButton>
      <Position>1 of 3</Position>
      <NavButton type="button" aria-label="Następny"><NavIcon name="next" /></NavButton>
      <NavButton type="button" aria-label="Następna strona"><NavIcon name="nextPage" /></NavButton>
      <NavButton type="button" aria-label="Ostatni"><NavIcon name="last" /></NavButton>
      <NavButton type="button" aria-label="Dodaj"><NavIcon name="add" /></NavButton>
      <NavButton type="button" aria-label="Powiel"><NavIcon name="clone" faded /></NavButton>
      <NavButton type="button" aria-label="Filtr">
        <svg width="8" height="9" viewBox="0 0 8 9">
          <path d="M0 0h8v3L5.500 5v4h-3V5L0 3z" fill="#f08a18" />
          <path d="M1.500 1.500h5" stroke="#fff" />
        </svg>
      </NavButton>
      <ScrollGap />
      <NavButton type="button" aria-label="Przewiń w lewo"><NavIcon name="prev" /></NavButton>
      <ScrollThumb />
      <ScrollTrack />
      <NavButton type="button" aria-label="Przewiń w prawo"><NavIcon name="next" /></NavButton>
    </Navigator>
  </GridBox>
);

const Summary = () => (
  <Details>
    <DetailTable>
      <tbody>
        {summary.map(([name, value]) => (
          <tr key={name}>
            <DetailHead $w={175}>{name}</DetailHead>
            <DetailValue>{value}</DetailValue>
          </tr>
        ))}
      </tbody>
    </DetailTable>
    <DetailTable>
      <tbody>
        <tr>
          <DetailHead $w={124}><label htmlFor="ztw">ZTW</label></DetailHead>
          <DetailValue $w={128}><ZtwMark id="ztw" type="checkbox" /></DetailValue>
          <DetailValue $w={137} />
        </tr>
        {audit.map(([name, user, time]) => (
          <tr key={name}>
            <DetailHead $w={124}>{name}</DetailHead>
            <DetailValue>{user}</DetailValue>
            <DetailValue>{time}</DetailValue>
          </tr>
        ))}
      </tbody>
    </DetailTable>
  </Details>
);

const Actions = () => (
  <SideBar>
    <SideButton icon={ReportIcon}><u>R</u>aporty</SideButton>
    <SideButton icon={OpenMailIcon}>Emailing</SideButton>
    <SideButton icon={PreviewIcon}><u>P</u>odgląd</SideButton>
    <ButtonStack>
      <SideButton icon={NewIcon}><u>N</u>owy</SideButton>
      <SideButton icon={EditIcon}><u>E</u>dytuj</SideButton>
      <SideButton icon={DeleteIcon}><u>U</u>suń</SideButton>
    </ButtonStack>
    <SideButton icon={StatusIcon}><u>S</u>tatus</SideButton>
    <SideButton big>Eksport FK</SideButton>
    <LowerButtons>
      <ButtonStack>
        <SideButton icon={MailIcon}>Email</SideButton>
        <SideButton icon={SmsIcon}>SMS</SideButton>
      </ButtonStack>
      <SideButton icon={ExportIcon}>Eksport</SideButton>
      <SideButton icon={FunctionIcon} big>Funkcje</SideButton>
      <SideButton icon={RefreshIcon}>O<u>d</u>śwież</SideButton>
      <SideButton icon={HouseIcon}><u>W</u>yjście</SideButton>
    </LowerButtons>
  </SideBar>
);

const App = () => (
  <Window>
    <GlobalStyle />
    <TitleBar>
      <Logo />
      <WindowTitle>
        Rejestr sprzedaży - SPEDTRANS 8 .:: WERSJA DEMONSTRACYJNA MAREK BRZEZIŃSKI BIURO ::.
      </WindowTitle>
      <MoveHint>
        <svg width="11" height="7" viewBox="0 0 11 7">
          <path d="M0 3.500 3.500 0v7z" fill="#222" />
          <path d="M11 3.500 7.500 0v7z" fill="#222" />
          <path d="M3 2.500h5v2H3z" fill="#222" />
        </svg>
      </MoveHint>
      <WindowButton type="button" aria-label="Minimalizuj">
        <svg width="10" height="10" viewBox="0 0 10 10"><path d="M0 5.500h10" stroke="#000" /></svg>
      </WindowButton>
      <WindowButton type="button" aria-label="Przywróć">
        <svg width="10" height="10" viewBox="0 0 10 10">
          <path d="M.5 2.500h7v7h-7zM2.500 2V.500h7v7H8" fill="none" stroke="#000" />
        </svg>
      </WindowButton>
      <WindowButton type="button" aria-label="Zamknij">
        <Cross size={10} width={0.9} />
      </WindowButton>
    </TitleBar>
    <Ribbon />
    <DocTabs>
      <DocTab>
        <Logo />
        <a href="#">Rejestr zleceń transportu i spedycji</a>
      </DocTab>
      <DocTab $active>
        <Logo />
        <a href="#">Rejestr sprzedaży</a>
        <SquareButton type="button" aria-label="Zamknij kartę">
          <Cross />
        </SquareButton>
      </DocTab>
      <DocTools>
        <SquareButton type="button" aria-label="Narzędzia okna"><WrenchIcon /></SquareButton>
        <SquareButton type="button" $w={15} aria-label="Lista kart"><Caret /></SquareButton>
        <SquareButton type="button" aria-label="Zamknij okno"><Cross /></SquareButton>
      </DocTools>
    </DocTabs>
    <Workspace>
      <Main>
        <FilterPanel />
        <PageTabs>
          <PageTab href="#" $active>Wszystkie dokumenty sprzedaży</PageTab>
          <PageTab href="#">Nierozliczone</PageTab>
          <TabSplit />
          <PageTab href="#">Nierozliczone nieprzeterminowane</PageTab>
          <TabSplit />
          <PageTab href="#">Nierozliczone przeterminowane</PageTab>
          <TabSplit />
          <PageTab href="#">Rozliczone</PageTab>
        </PageTabs>
        <Grid />
        <PageTabs>
          <PageTab href="#" $active>Podsumowanie</PageTab>
          <PageTab href="#">Pozycje dokumentu</PageTab>
        </PageTabs>
        <Summary />
      </Main>
      <Actions />
    </Workspace>
    <StatusBar>
      <StatusPart $w={155}>
        <TreeIcon />
        <StatusText>oddział : CE</StatusText>
      </StatusPart>
      <StatusPart $w={324}>
        <UserIcon />
        <StatusText>użytkownik : ADMIN : MACIEJ POSKROP</StatusText>
      </StatusPart>
    </StatusBar>
  </Window>
);

export default App;
